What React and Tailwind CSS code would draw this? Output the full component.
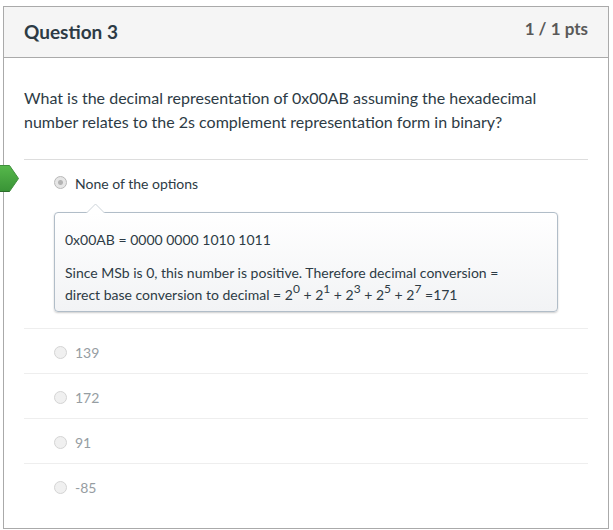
const others = ["139", "172", "91", "-85"];

function Radio({ id, checked }) {
  return (
    <input
      id={id}
      type="radio"
      name="answer"
      disabled
      defaultChecked={checked}
      className={
        "m-0 size-[13px] shrink-0 appearance-none rounded-full border " +
        (checked
          ? "border-[#b8b8b8] bg-[radial-gradient(circle,#b4b4b4_0_2px,#e6e6e6_3px)]"
          : "border-[#d4d4d4] bg-[#f0f0f0]")
      }
    />
  );
}

function Power({ n }) {
  return (
    <>
      2<sup className="top-[-7px] text-[12px]">{n}</sup>
    </>
  );
}

export default function App() {
  return (
    <main className="bg-white pt-[6px] pr-1 pb-px pl-[3px] font-[Lato,sans-serif] text-[#2d3b45]">
      <section className="border border-[#aaaaaa]">
        <header className="flex items-start justify-between border-b border-[#aaaaaa] bg-[#f5f5f5] px-5 py-[10px]">
          <h2 className="text-[19px] leading-[30px] font-bold">Question 3</h2>
          <span className="text-[17px] leading-6 font-bold text-[#595959]">1 / 1 pts</span>
        </header>
        <div className="px-5 pt-7 pb-5">
          <p className="text-[16px] leading-6">
            What is the decimal representation of 0x00AB assuming the hexadecimal number relates to the 2s complement
            representation form in binary?
          </p>
          <div className="mt-[25px]">
            <div className="relative border-t border-[#dddddd] px-[30px] pt-3 pb-4">
              <svg
                className="absolute top-[5px] left-[-24px]"
                width="20"
                height="28"
                viewBox="0 0 20 28"
                role="img"
                aria-label="Correct"
              >
                <defs>
                  <linearGradient id="green" x1="0" y1="0" x2="0" y2="1">
                    <stop offset="0" stopColor="#56b84b" />
                    <stop offset="1" stopColor="#399336" />
                  </linearGradient>
                </defs>
                <path d="M-1 .5H9.500L18.500 13.500L9.500 26.500H-1Z" fill="url(#green)" stroke="#3f8f3c" />
                <path d="M0 26.500H9.500" stroke="#2c6d2a" />
              </svg>
              <div className="flex items-center gap-2">
                <Radio id="a0" checked />
                <label htmlFor="a0" className="pt-[3px] text-[14px] leading-[17px]">
                  None of the options
                </label>
              </div>
              <div className="relative mt-5 rounded border border-[#b1bdc8] bg-linear-to-b from-white to-[#f2f3f5] pt-4 pr-10 pb-[5px] pl-[10px] text-[14px] leading-[22px] shadow-[0_1px_2px_rgba(0,0,0,0.2)]">
                <svg className="absolute top-[-10px] left-[31px]" width="19" height="11" viewBox="0 0 19 11" aria-hidden="true">
                  <path d="M0 10.500L9.500 1L19 10.500V11H0Z" fill="#fff" />
                  <path d="M.5 10L9.500 1L18.500 10" fill="none" stroke="#ccd3d9" />
                </svg>
                <p>0x00AB = 0000 0000 1010 1011</p>
                <p className="mt-[11px]">
                  Since MSb is 0, this number is positive. Therefore decimal conversion = direct base conversion to
                  decimal = <Power n="0" /> + <Power n="1" /> + <Power n="3" /> + <Power n="5" /> + <Power n="7" /> =171
                </p>
              </div>
            </div>
            {others.map((text) => (
              <div key={text} className="flex h-[45px] items-center gap-2 border-t border-[#eeeeee] px-[30px] pt-[3px]">
                <Radio id={"a" + text} />
                <label htmlFor={"a" + text} className="text-[14px] leading-[17px] text-[#969da2]">
                  {text}
                </label>
              </div>
            ))}
          </div>
        </div>
      </section>
    </main>
  );
}
